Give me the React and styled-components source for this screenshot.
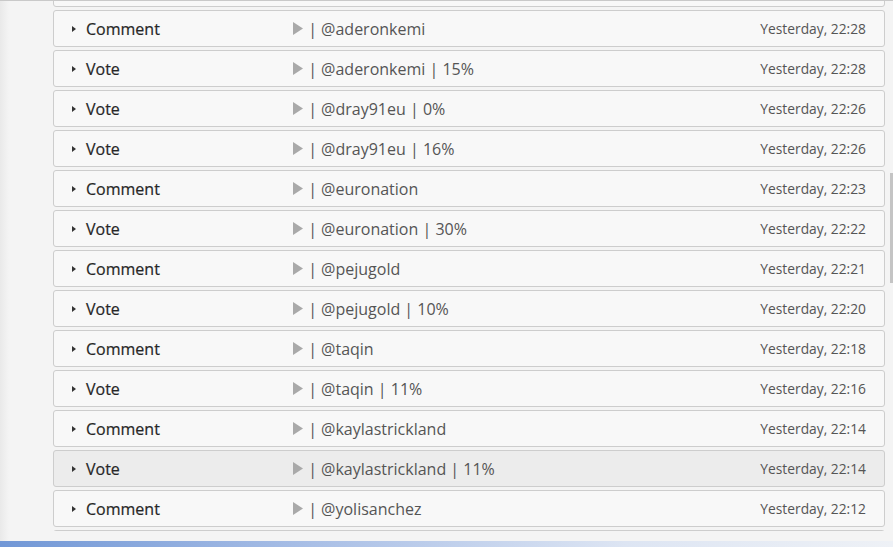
import React from 'react';
import styled, { createGlobalStyle } from 'styled-components';

const GlobalStyle = createGlobalStyle`
  html, body {
    margin: 0;
    padding: 0;
    background: #f4f4f4;
    font-family: "Open Sans", "Liberation Sans", sans-serif;
  }
`;

const Page = styled.div`
  position: relative;
  width: 893px;
  height: 547px;
  display: flex;
  flex-direction: column;
  background: linear-gradient(to right, #e9e9e9 0px, #f4f4f4 9px);
  border-top: 1px solid #c9c9c9;
  box-sizing: border-box;
  overflow: hidden;
`;

const Viewport = styled.div`
  height: 530px;
  overflow: hidden;
  padding: 0 8px 0 53px;
`;

const List = styled.ul`
  list-style: none;
  margin: -31px 0 0;
  padding: 0;
  display: flex;
  flex-direction: column;
  gap: 3px;
`;

const Row = styled.li`
  height: 37px;
  box-sizing: border-box;
  display: grid;
  grid-template-columns: 14px 206px 1fr auto;
  align-items: center;
  padding: 0 18px 0 18px;
  background: ${p => (p.$active ? '#ececec' : '#f8f8f8')};
  border: 1px solid #cdcdcd;
  border-radius: 3px;
`;

const Caret = styled.span`
  width: 0;
  height: 0;
  border-top: 3.5px solid transparent;
  border-bottom: 3.5px solid transparent;
  border-left: 4px solid #333;
`;

const Kind = styled.span`
  font-size: 16px;
  font-weight: 400;
  color: #262626;
  -webkit-text-stroke: 0.2px #262626;
`;

const Who = styled.span`
  display: flex;
  align-items: center;
  font-size: 16px;
  color: #555;
  white-space: pre;

  svg {
    margin: 0 1px 0 1px;
  }
`;

const When = styled.span`
  font-size: 13.8px;
  color: #555;
`;

const Scrollbar = styled.div`
  position: absolute;
  right: 0;
  top: 172px;
  width: 3px;
  height: 110px;
  background: #c4c4c4;
`;

const Footer = styled.div`
  margin-top: auto;
  height: 6px;
  background: linear-gradient(to right, #7197d6 0%, #a9bfe6 35%, #dde5f3 70%, #eef1f6 100%);
`;

const Play = () => (
  <svg width="10" height="13" viewBox="0 0 10 13">
    <path d="M0 0 L10 6.5 L0 13 Z" fill="#a9a9a9" />
  </svg>
);

// first and last entries sit mostly outside the visible area: only their frames show
const items = [
  { stub: true },
  { kind: 'Comment', who: '@aderonkemi', time: 'Yesterday, 22:28' },
  { kind: 'Vote', who: '@aderonkemi | 15%', time: 'Yesterday, 22:28' },
  { kind: 'Vote', who: '@dray91eu | 0%', time: 'Yesterday, 22:26' },
  { kind: 'Vote', who: '@dray91eu | 16%', time: 'Yesterday, 22:26' },
  { kind: 'Comment', who: '@euronation', time: 'Yesterday, 22:23' },
  { kind: 'Vote', who: '@euronation | 30%', time: 'Yesterday, 22:22' },
  { kind: 'Comment', who: '@pejugold', time: 'Yesterday, 22:21' },
  { kind: 'Vote', who: '@pejugold | 10%', time: 'Yesterday, 22:20' },
  { kind: 'Comment', who: '@taqin', time: 'Yesterday, 22:18' },
  { kind: 'Vote', who: '@taqin | 11%', time: 'Yesterday, 22:16' },
  { kind: 'Comment', who: '@kaylastrickland', time: 'Yesterday, 22:14' },
  { kind: 'Vote', who: '@kaylastrickland | 11%', time: 'Yesterday, 22:14', active: true },
  { kind: 'Comment', who: '@yolisanchez', time: 'Yesterday, 22:12' },
  { stub: true },
];

export default function App() {
  return (
    <Page>
      <GlobalStyle />
      <Viewport>
        <List>
          {items.map((it, i) =>
            it.stub ? (
              <Row key={i} />
            ) : (
              <Row key={i} $active={it.active}>
                <Caret />
                <Kind>{it.kind}</Kind>
                <Who>
                  <Play />
                  {` | ${it.who}`}
                </Who>
                <When>{it.time}</When>
              </Row>
            )
          )}
        </List>
      </Viewport>
      <Scrollbar />
      <Footer />
    </Page>
  );
}
